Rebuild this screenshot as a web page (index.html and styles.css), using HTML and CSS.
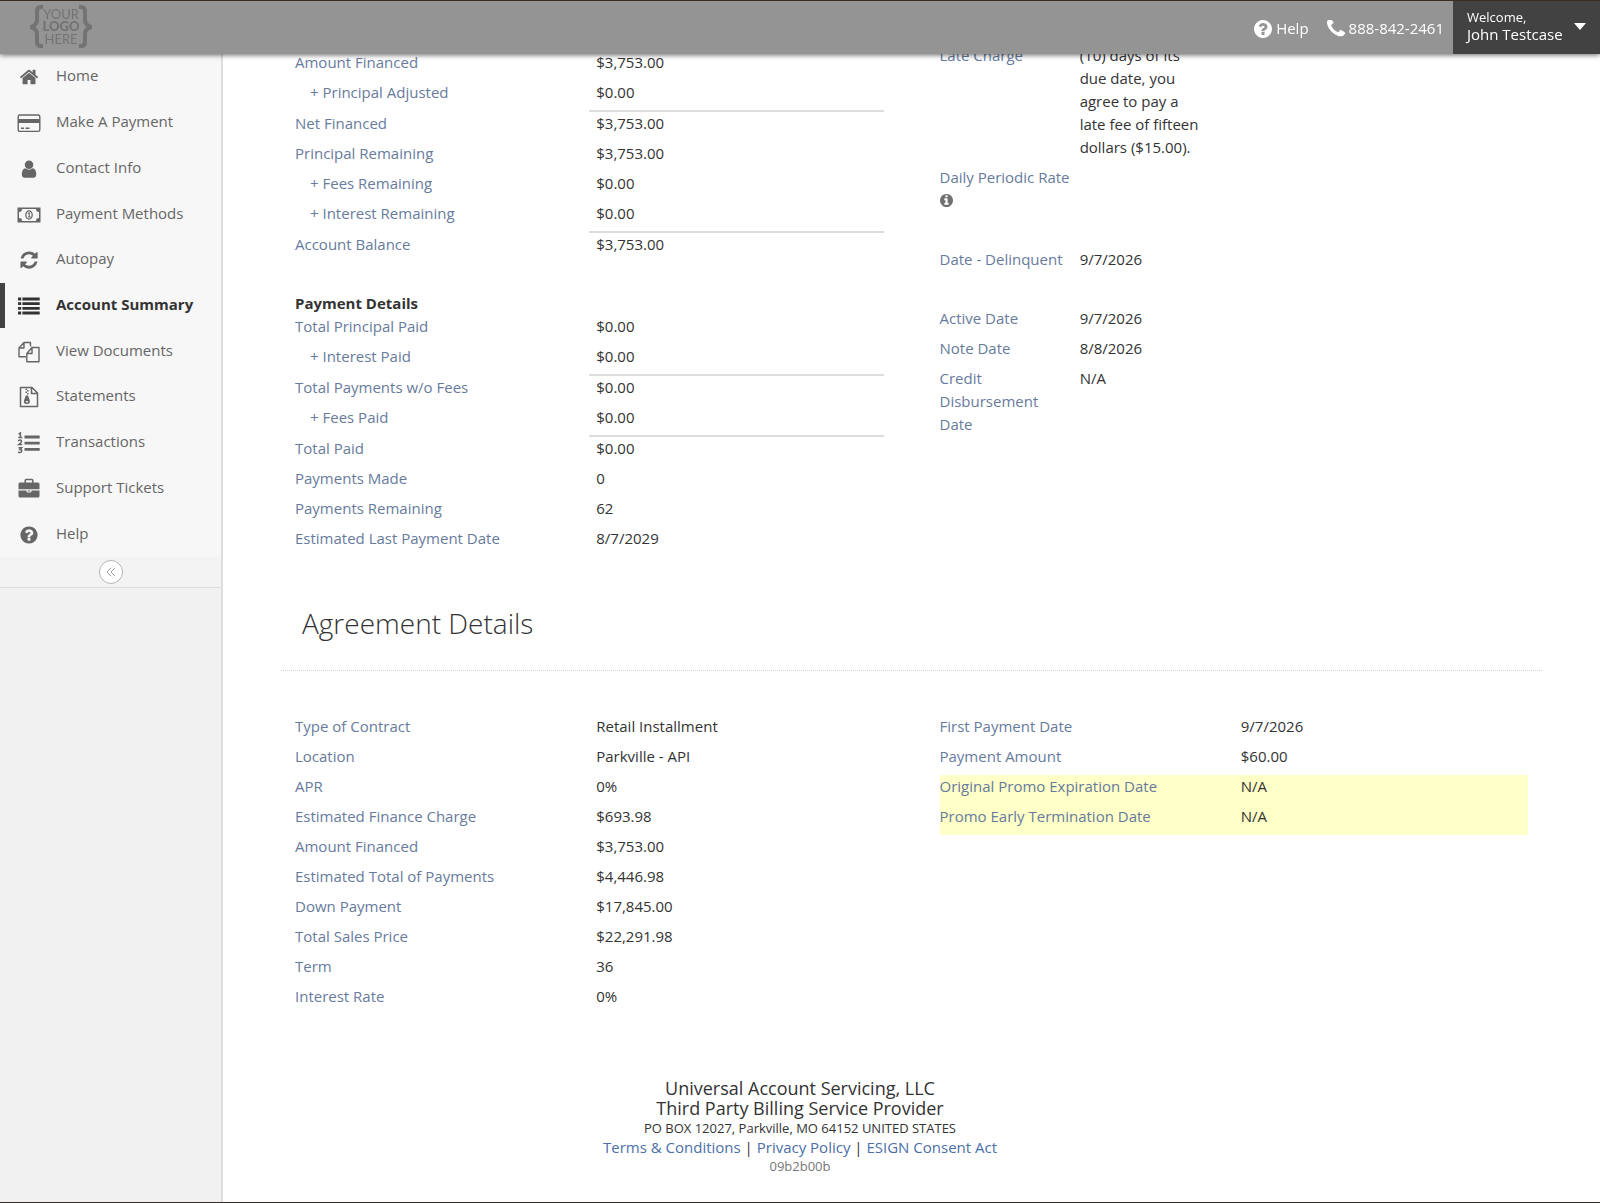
FILE: index.html
```html
<!DOCTYPE html>
<html lang="en">
<head>
<meta charset="utf-8">
<title>Account Summary</title>
<meta name="viewport" content="width=device-width, initial-scale=1">
<link rel="stylesheet" href="styles.css">
</head>
<body>
<svg class="sprite" aria-hidden="true">
  <symbol id="i-question" viewBox="0 0 1792 1792"><path d="M1024 1376v-192q0-14-9-23t-23-9h-192q-14 0-23 9t-9 23v192q0 14 9 23t23 9h192q14 0 23-9t9-23zm256-672q0-88-55.5-163t-138.500-116-170-41q-243 0-371 213-15 24 8 42l132 100q7 6 19 6 16 0 25-12 53-68 86-92 34-24 86-24 48 0 85.500 26t37.500 59q0 38-20 61t-68 45q-63 28-115.500 86.500t-52.500 125.500v36q0 14 9 23t23 9h192q14 0 23-9t9-23q0-19 21.500-49.500t54.500-49.500q32-18 49-28.500t46-35 44.500-48 28-60.500 12.500-81zm384 192q0 209-103 385.500t-279.500 279.500-385.500 103-385.500-103-279.500-279.500-103-385.500 103-385.500 279.500-279.500 385.500-103 385.500 103 279.500 279.500 103 385.500z"/></symbol>
</svg>

<header class="topbar">
  <a class="logo" href="#" aria-label="Your logo here">
    <svg width="62" height="44" viewBox="0 0 62 44">
      <g fill="none" stroke="#737373" stroke-width="4">
        <path d="M13 2H11Q7 2 7 6V15Q7 20 1 22Q7 24 7 29V37Q7 41 11 41H13"/>
        <path d="M49 2H51Q55 2 55 6V15Q55 20 61 22Q55 24 55 29V37Q55 41 51 41H49"/>
      </g>
      <g class="logo-text" text-anchor="middle">
        <text x="31" y="14">YOUR</text>
        <text class="strong" x="31" y="26">LOGO</text>
        <text x="31" y="39">HERE</text>
      </g>
    </svg>
  </a>
  <nav class="toplinks" aria-label="Support">
    <a href="#"><svg class="ic" viewBox="128 128 1536 1536"><use href="#i-question" x="0" y="0" width="1792" height="1792"/></svg>Help</a>
    <a href="#"><svg class="ic" viewBox="192 256 1408 1408"><path d="M1600 1240q0 27-10 70.500t-21 68.500q-21 50-122 106-94 51-186 51-27 0-53-3.500t-57.500-12.500-47-14.500-55.500-20.500-49-18q-98-35-175-83-127-79-264-216t-216-264q-48-77-83-175-3-9-18-49t-20.500-55.500-14.500-47-12.500-57.500-3.500-53q0-92 51-186 56-101 106-122 25-11 68.500-21t70.500-10q14 0 21 3 18 6 53 76 11 19 30 54t35 63.500 31 53.500q3 4 17.500 25t21.500 35.500 7 28.500q0 20-28.500 50t-62 55-62 53-28.500 46q0 9 5 22.500t8.500 20.500 14 24 11.500 19q76 137 174 235t235 174q2 1 19 11.500t24 14 20.500 8.500 22.500 5q18 0 46-28.500t53-62 55-62 50-28.500q14 0 28.500 7t35.500 21.500 25 17.500q25 15 53.500 31t63.500 35 54 30q70 35 76 53 3 7 3 21z"/></svg>888-842-2461</a>
  </nav>
  <button class="account" type="button">
    <span class="who"><span class="hello">Welcome,</span><span>John Testcase</span></span>
    <svg width="12" height="7" viewBox="0 0 12 7"><path d="M0 0h12L6 7z" fill="#fff"/></svg>
  </button>
</header>

<div class="shell">
  <aside class="sidebar">
    <ul class="menu">
      <li><a href="#"><svg viewBox="0 0 24 24"><g transform="translate(2 2) scale(.0112)"><path d="M1472 992v480q0 26-19 45t-45 19h-384v-384h-256v384h-384q-26 0-45-19t-19-45v-480q0-1 .5-3t.5-3l575-474 575 474q1 2 1 6zm223-69l-62 74q-8 9-21 11h-3q-13 0-21-7l-692-577-692 577q-12 8-24 7-13-2-21-11l-62-74q-8-10-7-23.500t11-21.500l719-599q32-26 76-26t76 26l244 204v-195q0-14 9-23t23-9h192q14 0 23 9t9 23v408l219 182q10 8 11 21.500t-7 23.500z"/></g></svg>Home</a></li>
      <li><a href="#"><svg viewBox="0 0 24 24"><rect x="1.200" y="4" width="21.600" height="16.400" rx="1.600" fill="none" stroke="currentColor" stroke-width="1.400"/><path d="M1 8h22v4H1zM4 16.500h3V18H4zM8.500 16.500h4V18h-4z"/></svg>Make A Payment</a></li>
      <li><a href="#"><svg viewBox="0 0 24 24"><g transform="translate(2 2) scale(.0112)"><path d="M1536 1399q0 109-62.500 187t-150.500 78h-854q-88 0-150.500-78t-62.500-187q0-85 8.500-160.500t31.500-152 58.500-131 94-89 134.500-34.500q131 128 313 128t313-128q76 0 134.500 34.500t94 89 58.500 131 31.500 152 8.500 160.500zm-256-887q0 159-112.500 271.500t-271.500 112.500-271.500-112.500-112.500-271.500 112.500-271.500 271.500-112.500 271.500 112.500 112.500 271.500z"/></g></svg>Contact Info</a></li>
      <li><a href="#"><svg viewBox="0 0 24 24"><path fill-rule="evenodd" d="M.5 4.500h23v15H.5zM5 6q0 3-3 3v6q3 0 3 3h14q0-3 3-3V9q-3 0-3-3z"/><ellipse cx="12" cy="12" rx="3.200" ry="4.200" fill="none" stroke="currentColor" stroke-width="1.300"/><path d="M10.500 10.200l1.300-1h1v4.300h1v1h-3v-1h.9v-2.900l-.7.500z"/></svg>Payment Methods</a></li>
      <li><a href="#"><svg viewBox="0 0 24 24"><g transform="translate(2 2) scale(.0112)"><path d="M1639 1056q0 5-1 7-64 268-268 434.500t-478 166.500q-146 0-282.500-55t-243.500-157l-129 129q-19 19-45 19t-45-19-19-45v-448q0-26 19-45t45-19h448q26 0 45 19t19 45-19 45l-137 137q71 66 161 102t187 36q134 0 250-65t186-179q11-17 53-117 8-23 30-23h192q13 0 22.500 9.500t9.500 22.500zm25-800v448q0 26-19 45t-45 19h-448q-26 0-45-19t-19-45 19-45l138-138q-148-137-349-137-134 0-250 65t-186 179q-11 17-53 117-8 23-30 23h-199q-13 0-22.500-9.500t-9.500-22.500v-7q65-268 270-434.500t480-166.500q146 0 284 55.500t245 156.500l130-129q19-19 45-19t45 19 19 45z"/></g></svg>Autopay</a></li>
      <li class="active"><a href="#" aria-current="page"><svg viewBox="0 0 24 24"><path d="M1 3.500h3.200v2.900H1zM1 8.200h3.200v2.900H1zM1 12.900h3.200v2.900H1zM1 17.600h3.200v2.900H1zM5.400 3.500h17.300v2.900H5.400zM5.400 8.200h17.300v2.900H5.400zM5.400 12.900h17.300v2.900H5.400zM5.400 17.600h17.300v2.900H5.400z"/></svg>Account Summary</a></li>
      <li><a href="#"><svg viewBox="0 0 24 24"><g fill="none" stroke="currentColor" stroke-width="1.400" stroke-linejoin="round"><path d="M9 16.800H2V8l5-5.500h6.500v4M7 2.500V8H2"/><path d="M15 7.500h7v14.200H9.800v-8.200zM15 7.500v6H9.800"/></g></svg>View Documents</a></li>
      <li><a href="#"><svg viewBox="0 0 24 24"><path d="M3.500 2.500h11.500l5.500 5.500v13.500h-17zM14.500 2.500v6h6" fill="none" stroke="currentColor" stroke-width="1.500" stroke-linejoin="round"/><path d="M8.500 3.500h1.500V5H8.500zM10 5h1.500v1.500H10zM8.500 6.500H10V8H8.500zM10 8h1.500v1.500H10zM8.800 10.500h2.200l1.800 5q.7 3.500-2.900 3.500t-2.900-3.500z"/><ellipse cx="9.900" cy="16.800" rx="1.400" ry=".8" fill="#f7f7f7"/></svg>Statements</a></li>
      <li><a href="#"><svg viewBox="0 0 24 24"><path d="M7.500 4.500h15.200v2.900H7.500zM7.500 10.700h15.200v2.900H7.500zM7.500 16.900h15.200v2.900H7.500z"/><g fill="none" stroke="currentColor" stroke-width="1.500"><path d="M1.600 3L3.400 2V6.500M1.400 6.600H5.300"/><path d="M1.500 10.200Q1.600 9 3.100 9T4.600 10.400Q4.600 11.400 1.800 13.500H5.200"/><path d="M1.500 16.800H4.600L3 18.500Q4.900 18.600 4.800 20T3.100 21.500T1.200 20.700"/></g></svg>Transactions</a></li>
      <li><a href="#"><svg viewBox="0 0 24 24"><path d="M8.200 6V3.500q0-1 1-1h5.600q1 0 1 1V6" fill="none" stroke="currentColor" stroke-width="1.500"/><path d="M3 5.500h18q1.500 0 1.500 1.500v5.200h-21V7q0-1.500 1.500-1.500zM1.500 13.400h8v1.200q0 .8.800.8h3.400q.8 0 .8-.8v-1.200h8v5.600q0 1.500-1.500 1.500H3q-1.500 0-1.500-1.500zM10.700 13.400h2.600v1h-2.600z"/></svg>Support Tickets</a></li>
      <li><a href="#"><svg viewBox="0 0 24 24"><use href="#i-question" x="2" y="2" width="20" height="20"/></svg>Help</a></li>
    </ul>
    <div class="collapse">
      <button type="button" aria-label="Collapse menu"><svg width="10" height="10" viewBox="0 0 10 10" fill="none" stroke="#999" stroke-width="1"><path d="M5 .8L1 5l4 4.200M9 .8L5 5l4 4.200"/></svg></button>
    </div>
  </aside>

  <main class="content">
    <section class="pair summary">
      <div class="balances">
        <dl class="details">
          <div><dt>Amount Financed</dt><dd>$3,753.00</dd></div>
          <div class="sum"><dt class="sub">+ Principal Adjusted</dt><dd>$0.00</dd></div>
          <div><dt>Net Financed</dt><dd>$3,753.00</dd></div>
          <div><dt>Principal Remaining</dt><dd>$3,753.00</dd></div>
          <div><dt class="sub">+ Fees Remaining</dt><dd>$0.00</dd></div>
          <div class="sum"><dt class="sub">+ Interest Remaining</dt><dd>$0.00</dd></div>
          <div><dt>Account Balance</dt><dd>$3,753.00</dd></div>
        </dl>
        <h3 class="group-title">Payment Details</h3>
        <dl class="details">
          <div><dt>Total Principal Paid</dt><dd>$0.00</dd></div>
          <div class="sum"><dt class="sub">+ Interest Paid</dt><dd>$0.00</dd></div>
          <div><dt>Total Payments w/o Fees</dt><dd>$0.00</dd></div>
          <div class="sum"><dt class="sub">+ Fees Paid</dt><dd>$0.00</dd></div>
          <div><dt>Total Paid</dt><dd>$0.00</dd></div>
          <div><dt>Payments Made</dt><dd>0</dd></div>
          <div><dt>Payments Remaining</dt><dd>62</dd></div>
          <div><dt>Estimated Last Payment Date</dt><dd>8/7/2029</dd></div>
        </dl>
      </div>
      <div class="pair">
        <dl class="details">
          <div><dt>Late Charge</dt><dd>(10) days of its due date, you agree to pay a late fee of fifteen dollars ($15.00).</dd></div>
          <div class="spaced"><dt>Daily Periodic Rate <svg class="info" viewBox="128 128 1536 1536"><path d="M1152 1376v-160q0-14-9-23t-23-9h-96v-512q0-14-9-23t-23-9h-320q-14 0-23 9t-9 23v160q0 14 9 23t23 9h96v320h-96q-14 0-23 9t-9 23v160q0 14 9 23t23 9h448q14 0 23-9t9-23zm-128-896v-160q0-14-9-23t-23-9h-192q-14 0-23 9t-9 23v160q0 14 9 23t23 9h192q14 0 23-9t9-23zm640 416q0 209-103 385.500t-279.500 279.500-385.500 103-385.500-103-279.500-279.500-103-385.500 103-385.500 279.500-279.500 385.500-103 385.500 103 279.500 279.500 103 385.500z"/></svg></dt><dd></dd></div>
          <div class="spaced"><dt>Date - Delinquent</dt><dd>9/7/2026</dd></div>
          <div><dt>Active Date</dt><dd>9/7/2026</dd></div>
          <div><dt>Note Date</dt><dd>8/8/2026</dd></div>
          <div><dt>Credit Disbursement Date</dt><dd>N/A</dd></div>
        </dl>
      </div>
    </section>

    <h2 class="section-title">Agreement Details</h2>
    <section class="pair">
      <dl class="details">
        <div><dt>Type of Contract</dt><dd>Retail Installment</dd></div>
        <div><dt>Location</dt><dd>Parkville - API</dd></div>
        <div><dt>APR</dt><dd>0%</dd></div>
        <div><dt>Estimated Finance Charge</dt><dd>$693.98</dd></div>
        <div><dt>Amount Financed</dt><dd>$3,753.00</dd></div>
        <div><dt>Estimated Total of Payments</dt><dd>$4,446.98</dd></div>
        <div><dt>Down Payment</dt><dd>$17,845.00</dd></div>
        <div><dt>Total Sales Price</dt><dd>$22,291.98</dd></div>
        <div><dt>Term</dt><dd>36</dd></div>
        <div><dt>Interest Rate</dt><dd>0%</dd></div>
      </dl>
      <dl class="details">
        <div><dt>First Payment Date</dt><dd>9/7/2026</dd></div>
        <div><dt>Payment Amount</dt><dd>$60.00</dd></div>
        <div class="promo"><dt>Original Promo Expiration Date</dt><dd>N/A</dd></div>
        <div class="promo"><dt>Promo Early Termination Date</dt><dd>N/A</dd></div>
      </dl>
    </section>

    <footer class="footer">
      <p class="company">Universal Account Servicing, LLC<br>Third Party Billing Service Provider</p>
      <p class="address">PO BOX 12027, Parkville, MO 64152 UNITED STATES</p>
      <p class="legal"><a href="#">Terms &amp; Conditions</a> | <a href="#">Privacy Policy</a> | <a href="#">ESIGN Consent Act</a></p>
      <p class="build">09b2b00b</p>
    </footer>
  </main>
</div>
</body>
</html>
```

FILE: styles.css
```css
:root {
  --sidebar: 223px;
  --topbar: 54px;
}

* {
  box-sizing: border-box;
}

body {
  margin: 0;
  background: #fff;
  color: #333;
  font: 15px/23px "Open Sans", "Noto Sans", sans-serif;
}

a {
  color: inherit;
  text-decoration: none;
}

dl, dd, p, h2, h3, ul {
  margin: 0;
  padding: 0;
}

.sprite {
  display: none;
}

/* Top bar */
.topbar {
  position: fixed;
  z-index: 10;
  top: 0;
  left: 0;
  right: 0;
  height: var(--topbar);
  display: flex;
  align-items: stretch;
  background: #949494;
  border-top: 1px solid #3b2b22;
  box-shadow: 0 1px 5px rgba(0, 0, 0, .6);
  color: #fff;
}

.logo {
  margin: 4px auto 0 30px;
}

.logo svg {
  display: block;
}

.logo-text {
  font: 13px Lato, sans-serif;
  fill: #737373;
}

.logo-text .strong {
  font-weight: 900;
}

.toplinks {
  display: flex;
  align-items: center;
  gap: 18px;
  padding: 2px 9px 0 0;
}

.toplinks a {
  display: flex;
  align-items: center;
  gap: 4px;
}

.ic {
  width: 18px;
  height: 18px;
  fill: #fff;
}

.account {
  display: flex;
  align-items: center;
  justify-content: space-between;
  width: 147px;
  padding: 0 14px 3px;
  border: 0;
  background: #424242;
  color: #fff;
  font: inherit;
  line-height: 18px;
  text-align: left;
}

.who span {
  display: block;
}

.who .hello {
  font-size: 13px;
  line-height: 16px;
}

/* Page frame */
.shell {
  display: grid;
  grid-template-columns: var(--sidebar) 1fr;
  min-height: 100vh;
  border-bottom: 1px solid #3b2b22;
}

.sidebar {
  padding-top: var(--topbar);
  background: #f1f1f1;
  border-right: 2px solid #ddd;
}

.menu {
  display: grid;
  grid-auto-rows: 1fr;
  min-height: 503px;
  list-style: none;
  background: #f7f7f7;
  color: #666;
}

.menu a {
  display: flex;
  align-items: center;
  gap: 15px;
  height: 100%;
  padding: 0 0 2px 17px;
}

.menu svg {
  width: 24px;
  height: 24px;
  margin-top: 3px;
  fill: currentColor;
}

.menu .active {
  border-left: 5px solid #424242;
  color: #333;
  font-weight: 700;
}

.menu .active a {
  padding-left: 12px;
}

.collapse {
  display: flex;
  justify-content: center;
  padding: 3px 0;
  background: #f3f3f3;
  border-bottom: 1px solid #ddd;
}

.collapse button {
  display: grid;
  place-items: center;
  width: 24px;
  height: 24px;
  padding: 0;
  border: 1px solid #b5b5b5;
  border-radius: 50%;
  background: #fff;
}

/* Content */
.content {
  padding: 44px 72px 23px;
}

.pair {
  display: grid;
  grid-template-columns: 1fr 1fr;
  column-gap: 56px;
  align-items: start;
}

.summary {
  margin-bottom: 46px;
}

.balances {
  padding-top: 7px;
}

.details div {
  display: grid;
  grid-template-columns: 1fr 1fr;
}

.details dt {
  padding-bottom: 7px;
  color: #677b9d;
}

.details dd {
  padding: 0 0 7px 7px;
}

.details .sub {
  padding-left: 15px;
}

.details .sum dd {
  padding-bottom: 6px;
  border-bottom: 2px solid #ddd;
}

.details .spaced {
  margin-bottom: 29px;
}

.details .promo {
  background: #ffffc8;
}

.group-title {
  margin-top: 29px;
  font-size: 15px;
  line-height: 23px;
}

.info {
  display: block;
  width: 13px;
  height: 13px;
  margin: 5px 0;
  fill: #707070;
}

.section-title {
  margin: 0 -14px 44px;
  padding: 0 21px 27px;
  border-bottom: 1px dotted #d4d4d4;
  font-size: 28px;
  line-height: 40px;
  font-weight: 300;
}

/* Footer */
.footer {
  margin: 63px -72px 0;
  padding-right: var(--sidebar);
  text-align: center;
}

.company {
  font-size: 18px;
  line-height: 20px;
}

.address {
  font-size: 13px;
  line-height: 20px;
}

.legal {
  line-height: 18px;
}

.legal a {
  color: #4a6fa8;
}

.build {
  color: #777;
  font-size: 13px;
  line-height: 20px;
}
```
